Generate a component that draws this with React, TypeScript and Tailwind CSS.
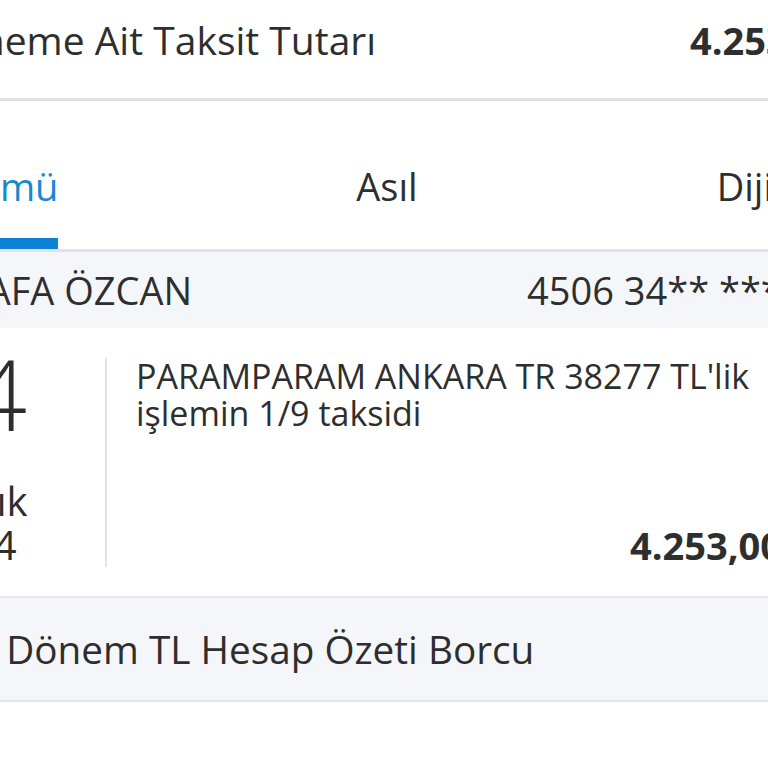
import React from "react";

export default function App() {
  return (
    <div
      className="w-[768px] h-[768px] overflow-hidden bg-white text-[#2e2e2e]"
      style={{ fontFamily: '"Open Sans", "Noto Sans", sans-serif' }}
    >
      {/* Summary row */}
      <div className="flex h-[98px] items-start whitespace-nowrap pt-[18px]">
        <div className="w-[690px] shrink-0">
          <span className="-ml-[71px] inline-block text-[39px] leading-[44px]">
            Döneme Ait Taksit Tutarı
          </span>
        </div>
        <span className="shrink-0 text-[38px] font-bold leading-[44px]">4.253,00 TL</span>
      </div>
      <div className="h-[3px] bg-[#dfe2e6]" />

      {/* Tabs */}
      <div className="-ml-[183px] flex h-[148px] w-[1140px] whitespace-nowrap">
        <div className="flex flex-1 justify-center">
          <div className="flex h-full flex-col">
            <span className="pt-[63px] text-[38px] leading-[44px] text-[#1a88d0]">Tümü</span>
            <div className="mt-auto h-[11px] bg-[#0b82d4]" />
          </div>
        </div>
        <div className="flex flex-1 justify-center">
          <span className="pt-[63px] text-[38px] leading-[44px]">Asıl</span>
        </div>
        <div className="flex flex-1 justify-center">
          <span className="pt-[63px] text-[38px] leading-[44px]">Dijital</span>
        </div>
      </div>
      <div className="h-[3px] bg-[#dfe2e6]" />

      {/* Card holder */}
      <div className="flex h-[76px] items-center whitespace-nowrap bg-[#f4f6f9]">
        <div className="w-[527px] shrink-0">
          <span className="-ml-[117px] inline-block text-[38px] leading-[44px]">MUSTAFA ÖZCAN</span>
        </div>
        <span className="shrink-0 text-[38px] leading-[44px]">4506 34** **** 1234</span>
      </div>

      {/* Transaction */}
      <div className="flex h-[270px] whitespace-nowrap border-b-[2px] border-[#e4e6ea] pt-[30px] pb-[29px]">
        <div className="-ml-[137px] flex w-[216px] shrink-0 flex-col items-center">
          <span className="-mt-[15px] text-[98px] font-light leading-[100px]">14</span>
          <span className="mt-[36px] ml-[8px] text-[40px] leading-[44px]">Aralık</span>
          <span className="text-[40px] leading-[44px]">2024</span>
        </div>
        <div className="ml-[26px] w-[2px] shrink-0 bg-[#e1e4e8]" />
        <div className="ml-[29px] flex shrink-0 flex-col">
          <span className="text-[34px] leading-[37px]">PARAMPARAM ANKARA TR 38277 TL'lik</span>
          <span className="text-[34px] leading-[37px]">işlemin 1/9 taksidi</span>
          <span className="mt-auto ml-[494px] text-[38px] font-bold leading-[44px]">4.253,00 TL</span>
        </div>
      </div>

      {/* Statement debt */}
      <div className="flex h-[104px] items-center whitespace-nowrap border-b-[2px] border-[#e4e6ea] bg-[#f4f6f9]">
        <span className="-ml-[72px] inline-block text-[38.7px] leading-[44px]">Son Dönem TL Hesap Özeti Borcu</span>
      </div>
    </div>
  );
}
